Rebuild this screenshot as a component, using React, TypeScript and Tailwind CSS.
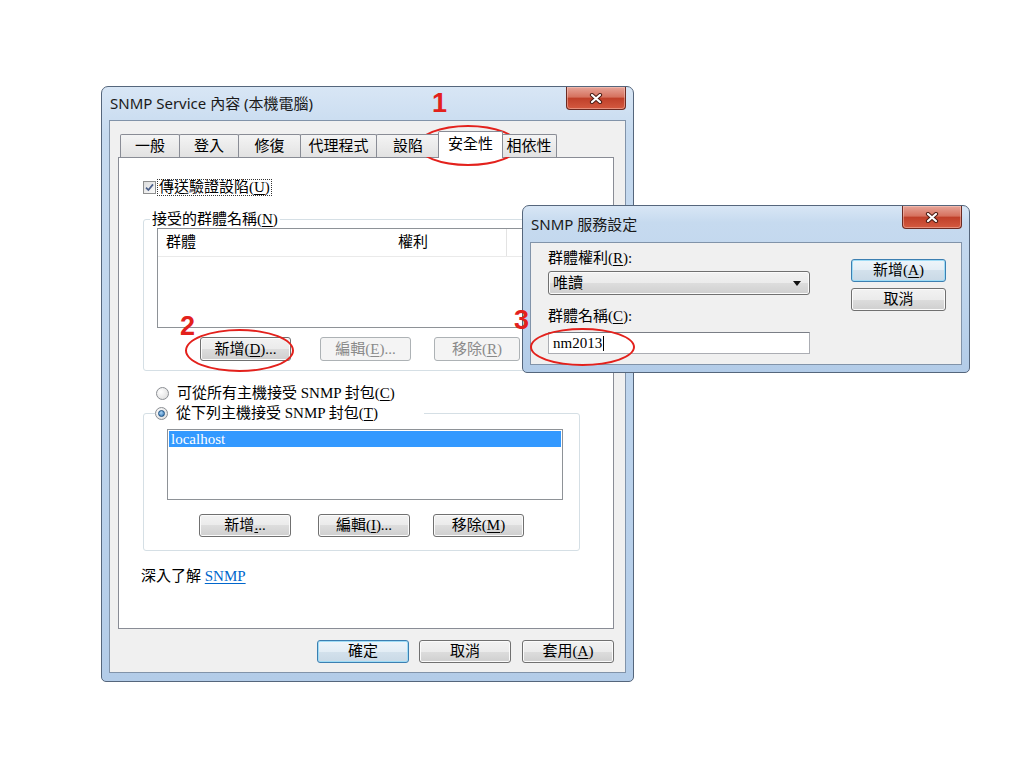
import React from "react";

const serif = "font-['Liberation_Serif','Noto_Sans_CJK_TC',serif]";
const ui = "font-['Noto_Sans','Noto_Sans_CJK_TC',sans-serif]";

function CloseBtn() {
  return (
    <div className="w-[60px] h-[23px] rounded-b-[4px] border border-t-0 border-[#6b2a22] bg-[linear-gradient(#e6a498,#d6725f_45%,#c0402a_52%,#d45a40)] shadow-[inset_0_0_0_1px_rgba(255,210,200,0.45)] flex items-center justify-center">
      <svg width="14" height="11" viewBox="0 0 14 11">
        <path d="M3 2 L11 9 M11 2 L3 9" stroke="#4a1c14" strokeWidth="4.2" strokeLinecap="round" />
        <path d="M3 2 L11 9 M11 2 L3 9" stroke="#ffffff" strokeWidth="2.2" strokeLinecap="round" />
      </svg>
    </div>
  );
}

function Btn({
  children,
  w,
  kind = "normal",
  className = "",
}: {
  children: React.ReactNode;
  w: string;
  kind?: "normal" | "default" | "disabled";
  className?: string;
}) {
  const look =
    kind === "disabled"
      ? "border-[#adb2b5] bg-[#f4f4f4] text-[#8a8a8a]"
      : kind === "default"
      ? "border-[#3c7fb1] bg-[linear-gradient(#eef5fa,#e3edf5_50%,#d3e1ec_50%,#c9d9e6)] shadow-[inset_0_0_0_1px_#9fdcf6] text-black"
      : "border-[#707070] bg-[linear-gradient(#f2f2f2,#ebebeb_50%,#dddddd_50%,#cfcfcf)] shadow-[inset_0_0_0_1px_#fbfbfb] text-black";
  return (
    <div
      className={`${w} ${look} ${className} ${serif} h-[23px] shrink-0 rounded-[3px] border flex items-center justify-center text-[15px] leading-none`}
    >
      {children}
    </div>
  );
}

function Tab({ label, w, sel = false, ml = "-ml-px" }: { label: string; w: string; sel?: boolean; ml?: string }) {
  if (sel)
    return (
      <div
        className={`${w} ${ml} ${serif} relative z-10 h-[27px] -mb-px bg-white border border-b-0 border-[#898c95] rounded-t-[2px] flex justify-center pt-[2px] text-[15px] leading-[20px]`}
      >
        {label}
      </div>
    );
  return (
    <div
      className={`${w} ${ml} ${serif} h-[23px] bg-gradient-to-b from-[#f4f4f4] to-[#e2e2e2] border border-b-0 border-[#898c95] rounded-t-[2px] flex items-center justify-center text-[15px] leading-none`}
    >
      {label}
    </div>
  );
}

function Radio({ checked }: { checked: boolean }) {
  return (
    <div className="w-[13px] h-[13px] shrink-0 rounded-full border border-[#8b8e93] bg-[radial-gradient(circle_at_35%_35%,#ffffff,#d9d9d9)] flex items-center justify-center">
      {checked && (
        <div className="w-[7px] h-[7px] rounded-full border border-[#1b4f80] bg-[radial-gradient(circle_at_40%_35%,#a9d4f5,#2d6fb0)]" />
      )}
    </div>
  );
}

function MainDialog() {
  return (
    <div className="absolute left-[101px] top-[86px] w-[533px] flex flex-col rounded-t-[7px] rounded-b-[5px] border border-[#55667c] bg-[linear-gradient(180deg,#d8e6f5,#c6daef_8%,#bcd3ec_60%,#b3cce8)]">
      {/* title bar */}
      <div className="h-[33px] flex justify-between pl-[8px] pr-[7px]">
        <div className={`${ui} self-center text-[15px] leading-none text-[#1a1a1a]`}>SNMP Service 內容 (本機電腦)</div>
        <CloseBtn />
      </div>
      {/* client */}
      <div className="mx-[7px] mb-[8px] flex flex-col bg-[#f0f0f0] border border-[#8193a9] pl-[8px] pr-[11px] pt-[10px] pb-[9px]">
        {/* tabs */}
        <div className="relative z-10 h-[26px] flex items-end pl-[2px]">
          <Tab label="一般" w="w-[60px]" ml="ml-0" />
          <Tab label="登入" w="w-[60px]" />
          <Tab label="修復" w="w-[63px]" />
          <Tab label="代理程式" w="w-[77px]" />
          <Tab label="設陷" w="w-[64px]" />
          <Tab label="安全性" w="w-[65px]" sel ml="-ml-[2px]" />
          <Tab label="相依性" w="w-[56px]" ml="-ml-[2px]" />
        </div>
        {/* panel */}
        <div className={`${serif} h-[472px] bg-white border border-[#898c95] flex flex-col pl-[24px] pt-[20px] text-[15px] text-black`}>
          {/* checkbox */}
          <div className="h-[18px] flex items-center">
            <div className="w-[13px] h-[13px] shrink-0 border border-[#8e8f8f] bg-gradient-to-br from-[#dcdcdc] to-[#fbfbfb] flex items-center justify-center">
              <svg width="9" height="9" viewBox="0 0 9 9">
                <path d="M1 4.6 L3.4 7 L8 1.4" stroke="#4b5f8a" strokeWidth="1.7" fill="none" />
              </svg>
            </div>
            <div className="ml-[1px] h-[17px] px-[1px] border border-dotted border-[#333] flex items-center leading-none">
              傳送驗證設陷(<span className="underline underline-offset-2">U</span>)
            </div>
          </div>

          {/* group 1 */}
          <fieldset className="mt-[14px] w-[437px] rounded-[3px] border border-[#d5dfe5]">
            <legend className="ml-[6px] px-[2px] h-[18px] leading-[18px]">
              接受的群體名稱(<span className="underline underline-offset-2">N</span>)
            </legend>
            <div className="mx-[13px] h-[100px] border border-[#8e9297] bg-white">
              <div className="h-[28px] flex border-b border-[#eaeaea]">
                <div className="w-[233px] pl-[8px] flex items-center">群體</div>
                <div className="w-[116px] pl-[7px] flex items-center border-r border-[#e3e3e3]">權利</div>
                <div className="flex-1" />
              </div>
            </div>
            <div className="mt-[9px] mb-[9px] flex">
              <Btn w="w-[91px]" className="ml-[56px] h-[24px]">
                新增(<span className="underline underline-offset-2">D</span>)...
              </Btn>
              <Btn w="w-[91px]" kind="disabled" className="ml-[29px] h-[24px]">
                編輯(<span className="underline underline-offset-2">E</span>)...
              </Btn>
              <Btn w="w-[86px]" kind="disabled" className="ml-[23px] h-[24px]">
                移除(<span className="underline underline-offset-2">R</span>)
              </Btn>
            </div>
          </fieldset>

          {/* radio 1 */}
          <div className="mt-[13px] h-[18px] flex items-center pl-[13px] gap-[8px]">
            <Radio checked={false} />
            <span className="leading-none">
              可從所有主機接受 SNMP 封包(<span className="underline underline-offset-2">C</span>)
            </span>
          </div>

          {/* group 2 */}
          <fieldset className="mt-[2px] w-[437px] rounded-[3px] border border-[#d5dfe5]">
            <legend className="ml-[11px] pr-[46px] h-[18px] flex items-center gap-[8px]">
              <Radio checked />
              <span className="leading-none">
                從下列主機接受 SNMP 封包(<span className="underline underline-offset-2">T</span>)
              </span>
            </legend>
            <div className="mt-[7px] ml-[23px] w-[396px] h-[71px] border border-[#8e9297] bg-white p-px">
              <div className="h-[16px] bg-[#3399ff] text-white leading-[16px] pl-[2px]">localhost</div>
            </div>
            <div className="mt-[14px] mb-[13px] flex">
              <Btn w="w-[92px]" className="ml-[55px]">
                新增<span className="underline underline-offset-2">.</span>..
              </Btn>
              <Btn w="w-[92px]" className="ml-[27px]">
                編輯(<span className="underline underline-offset-2">I</span>)...
              </Btn>
              <Btn w="w-[91px]" className="ml-[23px]">
                移除(<span className="underline underline-offset-2">M</span>)
              </Btn>
            </div>
          </fieldset>

          {/* link */}
          <div className="mt-[16px] -ml-[2px] h-[18px] flex items-center leading-none">
            深入了解&nbsp;<span className="text-[#0066cc] underline underline-offset-2">SNMP</span>
          </div>
        </div>
        {/* bottom buttons */}
        <div className="mt-[11px] flex justify-end gap-[10px]">
          <Btn w="w-[92px]" kind="default">確定</Btn>
          <Btn w="w-[92px]">取消</Btn>
          <Btn w="w-[92px]" className="ml-px">
            套用(<span className="underline underline-offset-2">A</span>)
          </Btn>
        </div>
      </div>
    </div>
  );
}

function SettingsDialog() {
  return (
    <div className="absolute left-[522px] top-[205px] w-[448px] flex flex-col rounded-t-[7px] rounded-b-[5px] border border-[#55667c] bg-[linear-gradient(180deg,#d8e6f5,#c6daef_10%,#bcd3ec_60%,#b3cce8)]">
      <div className="h-[36px] flex justify-between pl-[8px] pr-[7px]">
        <div className={`${ui} self-center text-[15px] leading-none text-[#1a1a1a]`}>SNMP 服務設定</div>
        <CloseBtn />
      </div>
      <div className={`${serif} mx-[7px] mb-[7px] flex bg-[#f0f0f0] border border-[#8193a9] pl-[17px] pt-[7px] pb-[10px] text-[15px] text-black`}>
        <div className="w-[262px] flex flex-col">
          <div className="h-[17px] flex items-center leading-none">
            群體權利(<span className="underline underline-offset-2">R</span>):
          </div>
          <div className="mt-[4px] h-[24px] rounded-[3px] border border-[#707070] bg-[linear-gradient(#f2f2f2,#ebebeb_50%,#dddddd_50%,#cfcfcf)] shadow-[inset_0_0_0_1px_#fbfbfb] flex items-center justify-between pl-[4px] pr-[8px]">
            <span className="leading-none">唯讀</span>
            <svg width="8" height="5" viewBox="0 0 8 5">
              <path d="M0 0 H8 L4 5 Z" fill="#111" />
            </svg>
          </div>
          <div className="mt-[13px] h-[17px] flex items-center leading-none">
            群體名稱(<span className="underline underline-offset-2">C</span>):
          </div>
          <div className="mt-[7px] h-[22px] border border-[#abadb3] border-t-[#7a7e86] bg-white flex items-center pl-[4px] leading-none">
            nm2013<span className="inline-block w-px h-[15px] bg-black ml-px" />
          </div>
        </div>
        <div className="ml-[41px] pt-[9px] flex flex-col gap-[6px]">
          <Btn w="w-[95px]" kind="default">
            新增(<span className="underline underline-offset-2">A</span>)
          </Btn>
          <Btn w="w-[95px]">取消</Btn>
        </div>
      </div>
    </div>
  );
}

export default function App() {
  const num = "font-['Liberation_Sans',sans-serif] font-bold text-[27px] leading-none text-[#e3211c]";
  const ring = "rounded-[50%] border-[2.5px] border-[#e3211c]";
  return (
    <div className="relative w-[1024px] h-[768px] bg-white overflow-hidden">
      <MainDialog />
      <SettingsDialog />
      {/* annotations */}
      <div className={`absolute left-[432px] top-[90px] ${num}`}>1</div>
      <div className={`absolute left-[417px] top-[125px] w-[102px] h-[41px] ${ring}`} />
      <div className={`absolute left-[180px] top-[313px] ${num}`}>2</div>
      <div className={`absolute left-[185px] top-[329px] w-[109px] h-[43px] ${ring}`} />
      <div className={`absolute left-[514px] top-[307px] ${num}`}>3</div>
      <div className={`absolute left-[530px] top-[328px] w-[105px] h-[38px] ${ring}`} />
    </div>
  );
}
